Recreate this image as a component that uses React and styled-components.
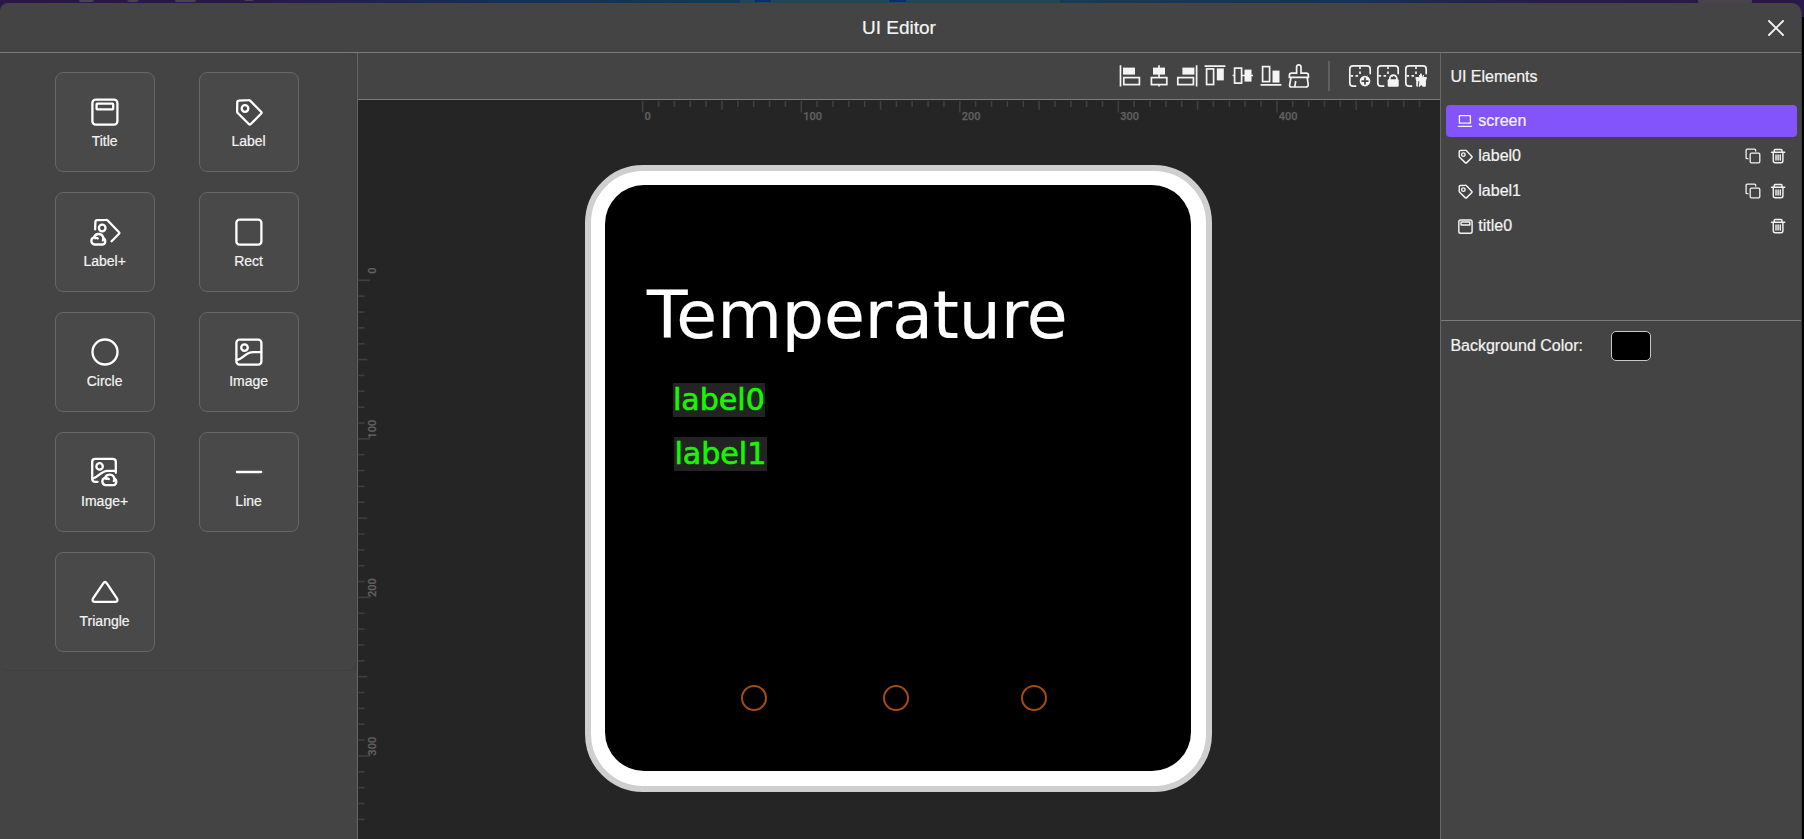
import React from "react";
import styled, { createGlobalStyle } from "styled-components";

const GlobalStyle = createGlobalStyle`
  * { box-sizing: border-box; }
  body {
    margin: 0;
    background: #000;
    color: #f4f4f4;
    font-family: "Liberation Sans", Arial, sans-serif;
    overflow: hidden;
  }
`;

const Page = styled.div`
  position: relative;
  width: 1804px;
  height: 839px;
  padding-top: 3px;
  overflow: hidden;
  background: #000;
`;

const Backdrop = styled.svg`
  position: absolute;
  top: 0;
  left: 0;
`;

const Modal = styled.div`
  position: relative;
  display: flex;
  flex-direction: column;
  width: 1802px;
  height: 836px;
  border-radius: 8px 10px 0 0;
  border-right: 1px solid #373737;
  background: #444;
  overflow: hidden;
  -webkit-text-stroke: 0.2px currentColor;
`;

const Header = styled.header`
  display: flex;
  flex: none;
  align-items: center;
  height: 50px;
  padding: 0 17px 0 30px;
  border-bottom: 1px solid #7b7b7b;
`;

const HeaderTitle = styled.h1`
  flex: 1;
  margin: 0;
  font-size: 19px;
  font-weight: 400;
  line-height: 24px;
  text-align: center;
`;

const IconButton = styled.button`
  display: flex;
  padding: 0;
  border: 0;
  background: none;
  color: #f2f2f2;
`;

const Workspace = styled.div`
  display: flex;
  flex: 1;
  min-height: 0;
`;

const Palette = styled.aside`
  flex: none;
  width: 358px;
  border-right: 1px solid #666;
`;

const PaletteGrid = styled.div`
  display: grid;
  grid-template-columns: 100px 100px;
  grid-auto-rows: 100px;
  gap: 20px 44px;
  width: 357px;
  height: 618px;
  padding: 19px 0 0 54.6px;
  border: solid #3e3e3e;
  border-width: 0 1px 1px 0;
  border-radius: 8px;
`;

const Tile = styled.button`
  display: flex;
  flex-direction: column;
  align-items: center;
  padding: 23px 0 0;
  border: 1px solid #666;
  border-radius: 8px;
  background: #494949;
  color: #fff;
  font: 14px/16px "Liberation Sans", Arial, sans-serif;
  -webkit-text-stroke: 0.2px currentColor;
`;

const TileLabel = styled.span`
  margin-top: 5px;
  color: #f4f4f4;
`;

const Stage = styled.main`
  display: flex;
  flex: 1;
  flex-direction: column;
  min-width: 0;
`;

const Toolbar = styled.div`
  display: flex;
  flex: none;
  align-items: center;
  justify-content: flex-end;
  gap: 4px;
  height: 47px;
  padding: 0 12px 1px 0;
  border-bottom: 1px solid #7b7b7b;
  color: #f4f4f4;
`;

const ToolDivider = styled.div`
  width: 2px;
  height: 30px;
  margin: 0 14px 0 13px;
  background: #606060;
`;

const Canvas = styled.div`
  position: relative;
  flex: 1;
  background: #252525;
  overflow: hidden;
`;

const Ruler = styled.svg`
  position: absolute;
  top: 0;
  left: 0;
  font-family: Roboto, sans-serif;
  font-size: 11px;
  font-weight: 500;
`;

const Device = styled.div`
  position: absolute;
  left: 226.7px;
  top: 64.7px;
  width: 627px;
  height: 627px;
  border: 6px solid #cfcfcf;
  border-radius: 58px;
  background: #fff;
`;

const Screen = styled.div`
  position: absolute;
  left: 14.5px;
  top: 14.5px;
  width: 586px;
  height: 586px;
  border-radius: 39px;
  background: #000;
`;

const ScreenTitle = styled.div`
  position: absolute;
  left: 41.9px;
  top: 90.6px;
  color: #fff;
  font: 66.4px/78px "DejaVu Sans", sans-serif;
  white-space: nowrap;
`;

const ScreenLabel = styled.div`
  position: absolute;
  left: ${(p) => p.$x}px;
  top: ${(p) => p.$y}px;
  width: 92.4px;
  height: 34px;
  background: #232323;
  color: #16f800;
  font: 30.1px/33px "DejaVu Sans", sans-serif;
  white-space: nowrap;
  -webkit-text-stroke: 0.6px currentColor;
`;

const TouchKey = styled.div`
  position: absolute;
  left: ${(p) => p.$x}px;
  top: 499.9px;
  width: 26px;
  height: 26px;
  border: 2px solid #a84a10;
  border-radius: 50%;
`;

const Inspector = styled.aside`
  flex: none;
  width: 361px;
  border-left: 1px solid #666;
`;

const ElementsPanel = styled.section`
  height: 268px;
  padding: 12px 4px 0 5px;
  border-bottom: 1px solid #7b7b7b;
`;

const PanelTitle = styled.h2`
  margin: 0 0 16px 4.4px;
  font-size: 16px;
  font-weight: 400;
  line-height: 24px;
`;

const ElementList = styled.div`
  display: flex;
  flex-direction: column;
  gap: 3px;
`;

const ElementRow = styled.div`
  display: flex;
  align-items: center;
  height: 32px;
  padding: 0 11.4px 0 10.5px;
  border-radius: 4px;
  background: ${(p) => (p.$active ? "#8354fb" : "transparent")};
  font-size: 16px;
`;

const GlyphSlot = styled.span`
  display: flex;
  justify-content: center;
  width: 17px;
`;

const ElementName = styled.span`
  flex: 1;
  margin-left: 4.8px;
  padding-bottom: 1px;
  line-height: 20px;
`;

const RowActions = styled.div`
  display: flex;
  gap: 9px;
`;

const PropertyRow = styled.div`
  display: flex;
  align-items: center;
  gap: 28px;
  padding: 10px 9.4px 0;
  font-size: 16px;
`;

const Swatch = styled.div`
  width: 40px;
  height: 30px;
  border: 1px solid #c8c8cc;
  border-radius: 5px;
  background: #000;
`;

const Svg = ({ size = 32, box = 32, width = 2.3, children, ...rest }) => (
  <svg
    width={size}
    height={size}
    viewBox={`0 0 ${box} ${box}`}
    fill="none"
    stroke="currentColor"
    strokeWidth={width}
    strokeLinecap="round"
    strokeLinejoin="round"
    style={{ flex: "none" }}
    {...rest}
  >
    {children}
  </svg>
);

const Cloud = (
  <path d="M4.6 11.6 A3.7 3.7 0 0 1 4.2 4.4 A4.9 4.9 0 0 1 13.4 4.2 L13.2 4.9 A3.6 3.6 0 0 1 13.2 11.6 Z M5.4 5.4 Q7 4.5 8 5.6 M13.4 4.4 Q13.9 6 13 7.6" />
);

const titleShape = (
  <>
    <rect x="3.4" y="3.6" width="25" height="25" rx="3.4" />
    <rect x="7.6" y="7.7" width="16.6" height="5.6" rx="0.5" />
  </>
);
const tagShape = (
  <>
    <path d="M4.3 6.3 Q4.4 4.7 6 4.7 L15.5 4.2 Q16.6 4.1 17.4 4.9 L28.1 15.8 Q29 16.8 28 17.8 L17.8 28 Q16.8 29 15.8 28 L5 17.3 Q4.1 16.5 4.1 15.4 Z" />
    <circle cx="12" cy="12.5" r="3.3" />
  </>
);
const shapes = {
  Title: titleShape,
  Label: tagShape,
  "Label+": (
    <>
      <path d="M6.1 13.4 L6.4 5.6 Q6.5 4.3 7.8 4.2 L17 3.9 Q18 3.8 18.7 4.5 L30 16.2 Q30.8 17 30 17.8 L22.6 25.2" />
      <circle cx="13.2" cy="12" r="3.3" />
      <g transform="translate(0.8 16.9)">{Cloud}</g>
    </>
  ),
  Rect: <rect x="3.4" y="3.6" width="25" height="25" rx="3.2" />,
  Circle: <circle cx="16" cy="16" r="12.5" />,
  Image: (
    <>
      <rect x="3.4" y="3.6" width="25" height="25" rx="3.2" />
      <circle cx="11.5" cy="11.6" r="3.3" />
      <path d="M3.6 24 C10 23.5 12 16.2 20.2 16.2 H28.2" />
    </>
  ),
  "Image+": (
    <>
      <path d="M8.6 25.8 H6.2 Q3.2 25.8 3.2 22.8 V5.8 Q3.2 2.8 6.2 2.8 H23.6 Q26.8 2.8 26.8 5.8 V16.8" />
      <circle cx="10.6" cy="10.4" r="3.2" />
      <path d="M3.4 22.6 C9 22.2 11.5 15 18.4 14.8 H26.6" />
      <g transform="translate(11.8 17.5)">{Cloud}</g>
    </>
  ),
  Line: <path d="M3.9 16 H28.2" />,
  Triangle: (
    <path d="M14.4 7.2 Q16 4.8 17.7 7.2 L28.1 22.7 Q29.2 25.5 26.6 25.8 H5.4 Q2.8 25.5 3.9 22.7 Z" />
  ),
};

const alignIcons = [
  <>
    <path d="M1.5 1.3 V22.5" />
    <rect x="4" y="3.6" width="12" height="7" fill="currentColor" stroke="none" />
    <rect x="4.8" y="13.6" width="15.6" height="7" />
  </>,
  <>
    <path d="M12 1.3 V22.5" />
    <rect x="6" y="3.6" width="12" height="7" fill="currentColor" stroke="none" />
    <rect x="4.4" y="13.6" width="15.4" height="7" fill="#444" />
  </>,
  <>
    <path d="M21.6 1.3 V22.5" />
    <rect x="7.4" y="3.6" width="12" height="7" fill="currentColor" stroke="none" />
    <rect x="2.8" y="13.6" width="15.6" height="7" />
  </>,
  <>
    <path d="M1.6 2.2 H22.4" />
    <rect x="3.6" y="4.9" width="7" height="15.6" />
    <rect x="13.8" y="4.4" width="7" height="12" fill="currentColor" stroke="none" />
  </>,
  <>
    <path d="M1.6 11.5 H22" />
    <rect x="3.6" y="4.1" width="7" height="15" fill="#444" />
    <rect x="13.5" y="5.6" width="7" height="12" fill="currentColor" stroke="none" />
  </>,
  <>
    <path d="M1.6 20.8 H22.4" />
    <rect x="3.6" y="2.6" width="7" height="15" />
    <rect x="13.5" y="6.6" width="7" height="12" fill="currentColor" stroke="none" />
  </>,
  <>
    <path d="M9.6 9.2 V2.9 Q9.8 0.9 11.8 0.9 Q13.8 0.9 14 2.9 V9.2 H19.2 Q21.4 9.4 21.4 11.2 V13.3 H2.4 V11.2 Q2.4 9.4 4.6 9.2 Z M4 13.5 L2.6 21.2 Q2.6 23 4.2 23 H18.6 Q21.4 23 21.2 20.5 L20.2 13.5 M8.7 17 L7.8 22.6" />
  </>,
];

const gridFrame = (
  <>
    <path d="M7.6 22.1 H5 Q1.8 22.1 1.8 19 V5 Q1.8 1.8 5 1.8 H19 Q22.2 1.8 22.2 5 V9.6" />
    <path d="M12 2.5 V12 M2.5 11.8 H12" strokeDasharray="2.6 2.4" strokeLinecap="butt" />
    <path d="M15 11.8 H20" strokeDasharray="2.2 1.8" strokeLinecap="butt" />
  </>
);

const groupIcons = [
  <>
    {gridFrame}
    <circle cx="17" cy="17.1" r="6.4" fill="#444" stroke="none" />
    <circle cx="17" cy="17.1" r="5.3" fill="currentColor" stroke="none" />
    <path d="M17 14.2 V20 M14.1 17.1 H19.9" stroke="#444" />
  </>,
  <>
    {gridFrame}
    <rect x="10.4" y="13.8" width="13" height="10" fill="#444" stroke="none" />
    <rect x="11.7" y="15.2" width="11" height="7.6" rx="1" fill="currentColor" stroke="none" />
    <path d="M13.8 16 V14.6 A3.5 3.5 0 0 1 20.8 14.6 V16" />
  </>,
  <>
    {gridFrame}
    <path
      d="M17 10 L18.6 13.6 H22.4 L21.4 17.4 V22.2 H18.6 L17 19.8 L15.8 22.2 H12.8 V17.4 L11.8 13.6 H15.4 Z"
      fill="currentColor"
      strokeWidth="1"
    />
    <path d="M14.8 17.6 L14.2 23" stroke="#444" strokeWidth="1" />
  </>,
];

const ScreenIcon = () => (
  <Svg size={16} box={16} width={1.3}>
    <path d="M2.4 2.6 H13.4 V10.2 H2.4 Z M1.4 13.3 H14.4" strokeLinecap="square" />
  </Svg>
);

const TagIcon = () => (
  <Svg size={17} width={2.7}>
    {tagShape}
  </Svg>
);

const TitleIcon = () => (
  <Svg size={17} width={2.7}>
    {titleShape}
  </Svg>
);

const CopyIcon = () => (
  <Svg size={16} box={16} width={1.3}>
    <rect x="5.2" y="5.2" width="9.6" height="9.6" rx="1.2" />
    <path d="M2.9 10.7 H1.9 Q1.1 10.7 1.1 9.7 V2.2 Q1.1 1.2 2.1 1.2 H9.7 Q10.7 1.2 10.7 2.2 V3" />
  </Svg>
);

const TrashIcon = () => (
  <Svg size={16} box={16} width={1.45}>
    <path d="M1.5 4.3 H14.7 M4.2 3.6 V2.4 Q4.2 1.4 5.2 1.4 H11 Q12 1.4 12 2.4 V3.6 M3.3 5 V12.8 Q3.3 14.7 5.2 14.7 H11 Q12.9 14.7 12.9 12.8 V5 M6 7 V12 M8.1 7 V12 M10.3 7 V12" />
  </Svg>
);

const elements = [
  { name: "screen", icon: <ScreenIcon />, active: true },
  { name: "label0", icon: <TagIcon />, copy: true, remove: true },
  { name: "label1", icon: <TagIcon />, copy: true, remove: true },
  { name: "title0", icon: <TitleIcon />, remove: true },
];

const STEP = 15.855;
const tickLength = (i) => (i % 10 === 0 ? 11.5 : i % 5 === 0 ? 8.8 : 6);

const Rulers = () => (
  <Ruler width="1083" height="739">
    <g fill="#3f3f3f">
      {Array.from({ length: 50 }, (_, i) => (
        <rect key={`x${i}`} x={283.9 + i * STEP} y="1" width="1.6" height={tickLength(i)} />
      ))}
      {Array.from({ length: 35 }, (_, i) => (
        <rect key={`y${i}`} x="0.5" y={179.5 + i * STEP} width={tickLength(i)} height="1.6" />
      ))}
    </g>
    <g fill="#606060" stroke="#606060" strokeWidth="0.25">
      {[0, 1, 2, 3, 4].map((n) => (
        <text key={n} x={286.6 + n * 10 * STEP} y="19.7">
          {n * 100}
        </text>
      ))}
      {[0, 1, 2, 3].map((n) => (
        <text
          key={n}
          textAnchor="middle"
          transform={`translate(18.4 ${170.6 + n * 10 * STEP}) rotate(-90)`}
        >
          {n * 100}
        </text>
      ))}
    </g>
  </Ruler>
);

export default function App() {
  return (
    <Page>
      <GlobalStyle />
      <Backdrop width="1804" height="18">
        <defs>
          <linearGradient id="sky">
            <stop offset="0" stopColor="#2b1748" />
            <stop offset="0.15" stopColor="#28184e" />
            <stop offset="0.28" stopColor="#152f58" />
            <stop offset="0.42" stopColor="#0c3d5b" />
            <stop offset="0.58" stopColor="#153d55" />
            <stop offset="0.75" stopColor="#18305a" />
            <stop offset="0.86" stopColor="#281b4b" />
            <stop offset="1" stopColor="#2a174d" />
          </linearGradient>
        </defs>
        <rect width="1804" height="17" fill="url(#sky)" />
        <rect x="740" width="320" height="3" fill="#1d4954" />
        <rect x="889" width="17" height="2" fill="#05306b" />
        <rect x="755" width="16" height="2" fill="#05306b" />
        <g fill="#49434b">
          <rect x="79" y="-4" width="15" height="6" rx="2" />
          <rect x="127" y="-4" width="12" height="6" rx="3" />
          <rect x="175" y="-4" width="21" height="6" rx="2" />
          <rect x="244" y="-4" width="10" height="5" rx="2" />
          <rect x="1698" y="-4" width="54" height="8" rx="3" />
        </g>
      </Backdrop>
      <Modal>
        <Header>
          <HeaderTitle>UI Editor</HeaderTitle>
          <IconButton aria-label="Close">
            <Svg size={16} box={16} width={1.9}>
              <path d="M1 1 L15 15 M15 1 L1 15" />
            </Svg>
          </IconButton>
        </Header>
        <Workspace>
          <Palette>
            <PaletteGrid>
              {Object.entries(shapes).map(([name, shape]) => (
                <Tile key={name}>
                  <Svg>{shape}</Svg>
                  <TileLabel>{name}</TileLabel>
                </Tile>
              ))}
            </PaletteGrid>
          </Palette>
          <Stage>
            <Toolbar>
              {alignIcons.map((icon, i) => (
                <Svg key={i} size={24} box={24} width={1.7} strokeLinecap="butt" strokeLinejoin="miter">
                  {icon}
                </Svg>
              ))}
              <ToolDivider />
              {groupIcons.map((icon, i) => (
                <Svg key={i} size={24} box={24} width={1.7}>
                  {icon}
                </Svg>
              ))}
            </Toolbar>
            <Canvas>
              <Rulers />
              <Device>
                <Screen>
                  <ScreenTitle>Temperature</ScreenTitle>
                  <ScreenLabel $x={67.7} $y={197.7}>label0</ScreenLabel>
                  <ScreenLabel $x={69.2} $y={251.7}>label1</ScreenLabel>
                  <TouchKey $x={136.3} />
                  <TouchKey $x={277.7} />
                  <TouchKey $x={415.8} />
                </Screen>
              </Device>
            </Canvas>
          </Stage>
          <Inspector>
            <ElementsPanel>
              <PanelTitle>UI Elements</PanelTitle>
              <ElementList>
                {elements.map((el) => (
                  <ElementRow key={el.name} $active={el.active}>
                    <GlyphSlot>{el.icon}</GlyphSlot>
                    <ElementName>{el.name}</ElementName>
                    <RowActions>
                      {el.copy && (
                        <IconButton aria-label="Copy">
                          <CopyIcon />
                        </IconButton>
                      )}
                      {el.remove && (
                        <IconButton aria-label="Delete">
                          <TrashIcon />
                        </IconButton>
                      )}
                    </RowActions>
                  </ElementRow>
                ))}
              </ElementList>
            </ElementsPanel>
            <PropertyRow>
              Background Color:
              <Swatch />
            </PropertyRow>
          </Inspector>
        </Workspace>
      </Modal>
    </Page>
  );
}
